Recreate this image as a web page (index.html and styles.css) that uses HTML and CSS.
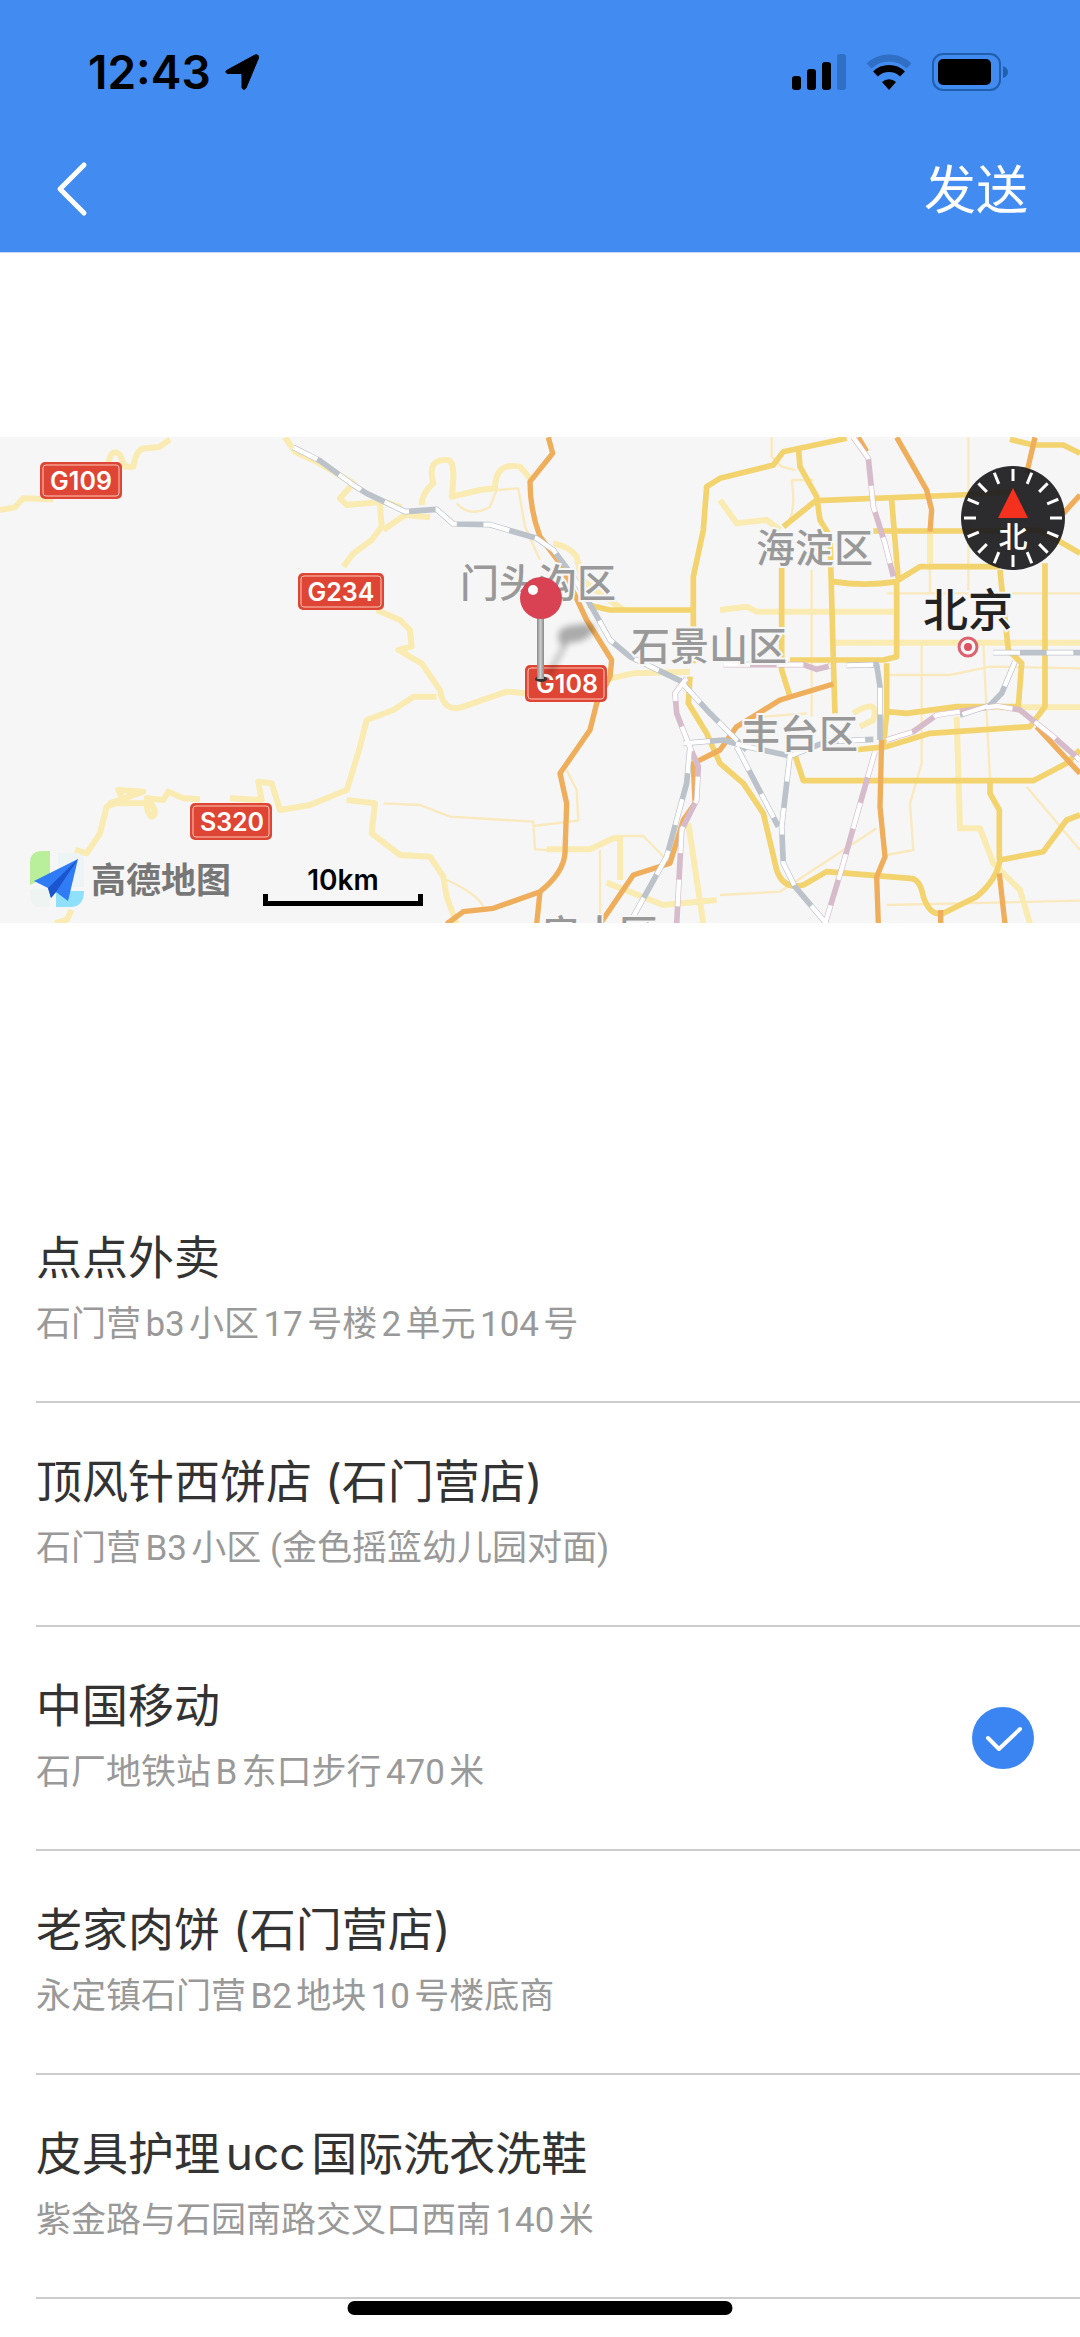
FILE: index.html
```html
<!DOCTYPE html>
<html lang="zh-CN">
<head>
  <title>发送位置</title>
  <meta charset="utf-8">
  <meta name="viewport" content="width=device-width, initial-scale=1">
  <link rel="stylesheet" href="styles.css">
</head>
<body>
  <header class="header">
    <div class="status-bar">
      <div class="status-left">
        <span class="time">12:43</span>
        <svg width="38" height="38" viewBox="0 0 38 38">
          <path d="M3.500 17.500L32 2q4-1 3.500 3L23 35q-2 3-4 0V22q0-1.500-1.500-1.500H4.500q-3-1-1-3z" stroke="#000" stroke-width="1" stroke-linejoin="round"/>
        </svg>
      </div>
      <div class="status-right">
        <svg width="54" height="36" viewBox="0 0 54 36">
          <rect x="0" y="22" width="9" height="14" rx="3"/>
          <rect x="15" y="15" width="9" height="21" rx="3"/>
          <rect x="30" y="8" width="9" height="28" rx="3"/>
          <rect x="45" y="0" width="9" height="36" rx="3" fill="#2f70c6"/>
        </svg>
        <svg width="46" height="36" viewBox="0 0 46 36">
          <path d="M3 12A29 29 0 0 1 43 12" fill="none" stroke="#2f70c6" stroke-width="7"/>
          <path d="M9.500 20A19.500 19.500 0 0 1 36.500 20" fill="none" stroke="#000" stroke-width="7"/>
          <path d="M23 36l-7-8a10 10 0 0 1 14 0z"/>
        </svg>
        <svg width="76" height="38" viewBox="0 0 76 38">
          <rect x="1" y="1" width="67" height="36" rx="10" fill="none" stroke="#205fae" stroke-width="2"/>
          <rect x="6" y="6" width="53" height="26" rx="5"/>
          <path d="M71 13q5 2 5 6t-5 6z" fill="#205fae"/>
        </svg>
      </div>
    </div>
    <nav class="nav">
      <button class="back-btn" aria-label="返回">
        <svg width="32" height="56" viewBox="0 0 32 56">
          <path d="M28 4L4 28l24 24" fill="none" stroke="#fff" stroke-width="5" stroke-linecap="round" stroke-linejoin="round"/>
        </svg>
      </button>
      <button class="send-btn">发送</button>
    </nav>
  </header>

  <main>
    <section class="map">
      <svg class="map-canvas" viewBox="0 0 1080 486">
        <defs>
          <g id="rail-gray">
            <path d="M880 52L960 92L1060 165L1100 190L1215 245L1310 238L1360 282L1470 284L1610 325L1660 360L1720 440L1780 540L1830 630L1890 680L2040 752L2130 850L2240 960"/>
            <path d="M2050 940L2170 930L2240 950L2370 978L2480 935L2620 928"/>
            <path d="M2070 950L2060 1060L2000 1280L1900 1460"/>
            <path d="M2210 950L2335 1190M2370 975L2345 1190L2350 1300L2385 1370L2480 1482"/>
            <path d="M2540 706L2630 704L2640 770V930"/>
            <path d="M2980 668H3240M3045 695L3005 790L2970 826L2880 855"/>
          </g>
          <g id="rail-pink">
            <path d="M2060 745L2025 790L2030 850L2065 940L2095 1010L2090 1110L2045 1200L2030 1482"/>
            <path d="M2560 22L2605 85L2620 230L2655 340L2680 440"/>
            <path d="M2170 704H2410L2450 718L2490 708"/>
            <path d="M2660 930L2740 905L2810 855L2990 828L3060 840L3160 920L3240 990"/>
            <path d="M2625 965L2575 1140L2530 1300L2475 1482"/>
          </g>
        </defs>
        <g transform="translate(0 -7) scale(.33333)">
          <g class="road-thin">
            <path d="M1150 1120L1260 1125L1350 1160L1600 1175L1605 1258L1680 1262M1600 1188L1735 1172L1730 1080L1700 1020"/>
            <path d="M1370 220Q1410 265 1470 230L1490 180L1555 175L1575 290L1620 390"/>
            <path d="M1340 1350Q1430 1390 1450 1430M1800 1260V1480M1850 1218H1930L2000 1290"/>
            <path d="M2315 22V80L2345 110L2385 120M2375 150Q2390 250 2360 280M2375 150H2440"/>
            <path d="M2905 22V480M2660 490H3240M2435 420V860M2790 300V490"/>
            <path d="M2765 640V1000L2730 1120L2740 1260L2660 1275M2950 640L2970 1050"/>
            <path d="M2660 735L2850 735L2970 710L3240 715M3080 1070L3240 1260"/>
            <path d="M2160 1395L2340 1385L2630 1195M2660 1425L3240 1412M2290 860L2420 850"/>
          </g>
          <g class="road-light">
            <path d="M0 240L45 232L70 205L160 208M325 100Q335 50 360 75L375 110H400Q410 50 440 55L480 50L510 28"/>
            <path d="M855 22L885 65L950 95L1060 160L1020 205L1040 225L1150 215L1205 232"/>
            <path d="M1140 225L1145 290L1115 330L1060 370L1030 410M1150 300L1215 255L1290 262"/>
            <path d="M1265 225Q1265 190 1300 160Q1280 85 1340 90Q1370 85 1355 200L1440 180L1485 175Q1485 95 1560 110L1590 145"/>
            <path d="M1130 540L1200 570L1230 600L1235 650L1195 660L1265 700L1320 780Q1330 850 1390 830L1520 785L1580 790"/>
            <path d="M1310 800H1240L1180 840L1100 870L1080 950L1050 1050L1040 1080L930 1125L840 1140L815 1060L775 1055L785 1110L690 1105"/>
            <path d="M600 1108L550 1105L505 1085L490 1110L440 1105Q480 1150 455 1160Q440 1150 440 1120L330 1120L430 1085L355 1080L370 1110L320 1130L300 1210L260 1270L225 1260M215 1440L200 1470L165 1480"/>
            <path d="M1040 1110L1125 1120L1115 1210L1200 1275L1290 1280L1330 1340L1340 1400L1370 1482"/>
            <path d="M1640 1258L1770 1258L1840 1225H1860V1350M1820 1358L1990 1425L2150 1410M2065 1180L2110 1482"/>
            <path d="M1830 745L1900 730L2070 725M1660 340Q1710 350 1730 380L1745 450L1870 540"/>
            <path d="M2160 210L2210 280L2300 270L2340 300M2160 540L2240 530L2270 545H2680M2500 638H3240"/>
            <path d="M2790 300V400M2870 860L2880 1195H2940L2980 1300L3060 1380L3090 1480M3000 832H3240"/>
            <path d="M2560 850Q2640 800 2620 870L2580 890"/>
          </g>
          <g class="road-ring">
            <path d="M2080 540H1830L1765 525M2080 700V440L2110 300L2120 170L2160 145L2320 105L2350 65L2540 25"/>
            <path d="M2395 50L2400 110L2450 200L2460 270L2490 320L2500 690L2505 850M2450 210L2350 290M2450 212L2880 195L3050 185"/>
            <path d="M2345 410V720L2370 800M2500 455Q2590 470 2690 455V680L2650 690H2370M2675 210L2695 450L2760 410H3000"/>
            <path d="M2620 303H2900L3120 300L3240 370M3000 420L3025 660L3065 700L3055 830L2870 830L2720 850L2660 845"/>
            <path d="M3135 400V830L3090 890L2790 910L2660 950L2560 960M2380 960L2410 1052H3100L3200 1000L3240 960"/>
            <path d="M2660 700V850L2650 950M2070 740L2065 820L2120 910L2160 1000L2230 1060L2290 1150L2330 1320Q2350 1380 2410 1365L2480 1325L2730 1345Q2760 1345 2770 1400Q2790 1460 2830 1450L2930 1400Q2990 1350 3000 1290L3130 1265L3200 1170L3240 1155"/>
            <path d="M2970 1050V1090L2998 1140V1290M3030 28L3100 45H3190L3240 70"/>
          </g>
          <g class="road-highway">
            <path d="M1645 22L1658 70L1590 155Q1590 240 1620 320L1680 400L1760 570L1835 690L1830 740L1790 820L1770 900L1680 1030L1700 1120L1695 1270Q1690 1330 1620 1385L1480 1435L1390 1445L1340 1482M1620 1385L1610 1482"/>
            <path d="M1800 1482L1900 1335L2010 1300L2050 1170L2085 1120L2080 1000L2160 960L2210 890L2340 810L2500 762"/>
            <path d="M2575 22L2600 65M2690 22L2780 180L2795 240L2790 305M3105 22L3080 130M3190 250L3240 195"/>
            <path d="M2645 930L2640 1130L2655 1280L2630 1340L2635 1482M3110 890L3240 1030M2998 1330L3015 1482M2822 1440V1482"/>
          </g>
          <use href="#rail-gray" class="rail-gray"/>
          <use href="#rail-pink" class="rail-pink"/>
          <use href="#rail-gray" class="rail-stripe"/>
          <use href="#rail-pink" class="rail-stripe"/>
        </g>
        <g class="district">
          <text x="460" y="160">门头沟区</text>
          <text x="756" y="125">海淀区</text>
          <text x="631" y="223">石景山区</text>
          <text x="741" y="311">丰台区</text>
          <text x="541" y="511">房山区</text>
        </g>
        <text class="city" x="923" y="190">北京</text>
        <circle cx="968" cy="210" r="9" fill="#f6f6f6" stroke="#dd6270" stroke-width="3"/>
        <circle cx="968" cy="210" r="4" fill="#dd5262"/>
        <g class="shield">
          <rect class="shield-bg" x="40" y="25" width="82" height="37" rx="5"/>
          <rect class="shield-line" x="43" y="28" width="76" height="31" rx="3"/>
          <text x="81" y="53">G109</text>
          <rect class="shield-bg" x="298" y="136" width="86" height="37" rx="5"/>
          <rect class="shield-line" x="301" y="139" width="80" height="31" rx="3"/>
          <text x="341" y="164">G234</text>
          <rect class="shield-bg" x="525" y="228" width="82" height="37" rx="5"/>
          <rect class="shield-line" x="528" y="231" width="76" height="31" rx="3"/>
          <text x="567" y="256">G108</text>
          <rect class="shield-bg" x="190" y="366" width="82" height="37" rx="5"/>
          <rect class="shield-line" x="193" y="369" width="76" height="31" rx="3"/>
          <text x="232" y="394">S320</text>
        </g>
        <!-- pin -->
        <defs>
          <linearGradient id="stem">
            <stop offset="0" stop-color="#888"/>
            <stop offset=".5" stop-color="#ccc"/>
            <stop offset="1" stop-color="#888"/>
          </linearGradient>
          <filter id="soft" x="-50%" y="-50%" width="200%" height="200%"><feGaussianBlur stdDeviation="3"/></filter>
        </defs>
        <path d="M545 240L562 210Q550 190 575 188Q600 184 593 195Q585 206 568 206L549 241z" fill="#000" opacity=".3" filter="url(#soft)"/>
        <ellipse cx="541" cy="242" rx="6" ry="3" fill="#333"/>
        <rect x="537" y="178" width="7" height="64" fill="url(#stem)"/>
        <circle cx="541" cy="161" r="21" fill="#d84253"/>
        <circle cx="533" cy="153" r="5" fill="#fff"/>
      </svg>

      <button class="compass" aria-label="指北针">
        <svg width="104" height="104" viewBox="0 0 104 104">
          <circle cx="52" cy="52" r="52" fill="#1c1c1e" fill-opacity=".93"/>
          <g stroke="#fff" stroke-width="3">
            <path id="tick" d="M52 3v12"/>
            <use href="#tick" transform="rotate(22.500 52 52)"/>
            <use href="#tick" transform="rotate(45 52 52)"/>
            <use href="#tick" transform="rotate(67.500 52 52)"/>
            <use href="#tick" transform="rotate(90 52 52)"/>
            <use href="#tick" transform="rotate(112.500 52 52)"/>
            <use href="#tick" transform="rotate(135 52 52)"/>
            <use href="#tick" transform="rotate(157.500 52 52)"/>
            <use href="#tick" transform="rotate(180 52 52)"/>
            <use href="#tick" transform="rotate(202.500 52 52)"/>
            <use href="#tick" transform="rotate(225 52 52)"/>
            <use href="#tick" transform="rotate(247.500 52 52)"/>
            <use href="#tick" transform="rotate(270 52 52)"/>
            <use href="#tick" transform="rotate(292.500 52 52)"/>
            <use href="#tick" transform="rotate(315 52 52)"/>
            <use href="#tick" transform="rotate(337.500 52 52)"/>
          </g>
          <path d="M52 22l15 30H37z" fill="#f4301f"/>
          <text class="compass-text" x="52" y="82">北</text>
        </svg>
      </button>

      <div class="map-footer">
        <svg width="56" height="58" viewBox="0 0 56 58">
          <path d="M0 34V12Q0 0 12 0h8v24z" fill="#b9ee9b"/>
          <path d="M28 2h18q8 0 8 8v26H28z" fill="#ecf4f5"/>
          <path d="M0 38h20v18H10Q0 56 0 44z" fill="#eef4f2"/>
          <path d="M26 40h28q0 16-14 16H26z" fill="#8fe0fa"/>
          <path d="M4 30L48 8L38 50L26 41L21 47L18 37z" fill="#2f7cf6"/>
          <path d="M48 8L18 37L21 47L26 41z" fill="#1a55cf"/>
        </svg>
        <span class="brand">高德地图</span>
        <div class="scale">
          <span>10km</span>
          <div class="scale-bar"></div>
        </div>
      </div>
    </section>

    <ul class="place-list">
      <li>
        <label class="place">
          <span class="place-info">
            <span class="place-name">点点外卖</span>
            <span class="place-address">石门营b3小区17号楼2单元104号</span>
          </span>
          <input type="radio" name="place">
        </label>
      </li>
      <li>
        <label class="place">
          <span class="place-info">
            <span class="place-name">顶风针西饼店 (石门营店)</span>
            <span class="place-address">石门营B3小区 (金色摇篮幼儿园对面)</span>
          </span>
          <input type="radio" name="place">
        </label>
      </li>
      <li>
        <label class="place">
          <span class="place-info">
            <span class="place-name">中国移动</span>
            <span class="place-address">石厂地铁站B东口步行470米</span>
          </span>
          <input type="radio" name="place" checked>
          <svg class="check" width="62" height="62" viewBox="0 0 62 62">
            <circle cx="31" cy="31" r="31" fill="#3b85f3"/>
            <path d="M16 31l11 11L48 22" fill="none" stroke="#fff" stroke-width="4" stroke-linecap="round" stroke-linejoin="round"/>
          </svg>
        </label>
      </li>
      <li>
        <label class="place">
          <span class="place-info">
            <span class="place-name">老家肉饼 (石门营店)</span>
            <span class="place-address">永定镇石门营B2地块10号楼底商</span>
          </span>
          <input type="radio" name="place">
        </label>
      </li>
      <li>
        <label class="place">
          <span class="place-info">
            <span class="place-name">皮具护理ucc国际洗衣洗鞋</span>
            <span class="place-address">紫金路与石园南路交叉口西南140米</span>
          </span>
          <input type="radio" name="place">
        </label>
      </li>
    </ul>
  </main>

  <div class="home-indicator"></div>
</body>
</html>
```

FILE: styles.css
```css
* {
  box-sizing: border-box;
}

body {
  font-family: Roboto, "Noto Sans CJK SC", sans-serif;
  margin: 0;
  background-color: #fff;
  color: #333;
}

button {
  padding: 0;
  border: none;
  background: none;
  font-family: inherit;
  cursor: pointer;
}

svg {
  display: block;
}

.header {
  background-color: #428bf0;
  border-bottom: 1px solid #c9d6f2;
}

.status-bar {
  display: flex;
  justify-content: space-between;
  align-items: center;
  height: 126px;
  padding: 18px 72px 0 88px;
}

.status-left {
  display: flex;
  align-items: center;
  gap: 12px;
}

.status-right {
  display: flex;
  align-items: center;
  gap: 20px;
}

.time {
  font-family: Inter, sans-serif;
  font-size: 46px;
  font-weight: 600;
  color: #000;
}

.nav {
  display: flex;
  justify-content: space-between;
  align-items: center;
  height: 126px;
  padding: 0 52px 0 56px;
}

.send-btn {
  padding-top: 6px;
  font-size: 52px;
  line-height: 64px;
  color: #fff;
}

.map {
  position: relative;
  margin: 184px 0;
}

.map-canvas {
  width: 100%;
  height: auto;
  background-color: #f6f6f6;
}

.road-thin,
.road-light,
.road-ring,
.road-highway,
.rail-gray,
.rail-pink,
.rail-stripe {
  fill: none;
  stroke-linejoin: round;
}

.road-thin {
  stroke: #fae9bd;
  stroke-width: 7px;
}

.road-light {
  stroke: #faebb2;
  stroke-width: 18px;
}

.road-ring {
  stroke: #f3d36e;
  stroke-width: 17px;
}

.road-highway {
  stroke: #efae5c;
  stroke-width: 16px;
}

.rail-gray {
  stroke: #bcc2ca;
  stroke-width: 17px;
}

.rail-pink {
  stroke: #d6bccb;
  stroke-width: 17px;
}

.rail-stripe {
  stroke: #fff;
  stroke-width: 13px;
  stroke-dasharray: 80 80;
}

.district {
  font-size: 39px;
  font-weight: 500;
  fill: #999;
}

.district text,
.city {
  paint-order: stroke;
  stroke: #f6f6f6;
  stroke-width: 4px;
}

.city {
  font-size: 45px;
  font-weight: 500;
  fill: #222;
}

.shield-bg {
  fill: #df4534;
}

.shield-line {
  fill: none;
  stroke: #f9c9b8;
  stroke-width: 1px;
}

.shield text {
  font-family: Inter, sans-serif;
  font-size: 25px;
  font-weight: 600;
  fill: #fff;
  text-anchor: middle;
}

.compass {
  position: absolute;
  top: 29px;
  right: 15px;
}

.compass-text {
  font-size: 29px;
  font-weight: 500;
  fill: #fff;
  text-anchor: middle;
}

.map-footer {
  position: absolute;
  left: 30px;
  bottom: 14px;
  display: flex;
  align-items: center;
}

.brand {
  margin: 4px 32px 0 5px;
  font-size: 35px;
  line-height: 48px;
  font-weight: 700;
  color: #777;
}

.scale {
  width: 160px;
  margin-top: 12px;
  font-family: Inter, sans-serif;
  font-size: 28px;
  line-height: 28px;
  font-weight: 600;
  text-align: center;
  color: #000;
}

.scale-bar {
  height: 12px;
  border: 5px solid #000;
  border-top: none;
}

.place-list {
  margin: 0;
  padding: 72px 0 0 36px;
  list-style: none;
}

.place {
  display: flex;
  justify-content: space-between;
  align-items: center;
  height: 224px;
  padding-right: 46px;
  border-bottom: 2px solid #ccc;
}

.place-info {
  display: flex;
  flex-direction: column;
  gap: 12px;
  padding-bottom: 6px;
  text-autospace: normal;
}

.place-name {
  font-family: Inter, "Noto Sans CJK SC", sans-serif;
  font-size: 46px;
  line-height: 64px;
}

.place-address {
  font-size: 35px;
  line-height: 48px;
  color: #999;
}

.place input {
  appearance: none;
  width: 0;
  height: 0;
  margin: 0;
}

.check {
  flex: none;
}

.home-indicator {
  position: fixed;
  left: 50%;
  bottom: 22px;
  width: 385px;
  height: 14px;
  border-radius: 7px;
  background-color: #000;
  transform: translateX(-50%);
}
```
